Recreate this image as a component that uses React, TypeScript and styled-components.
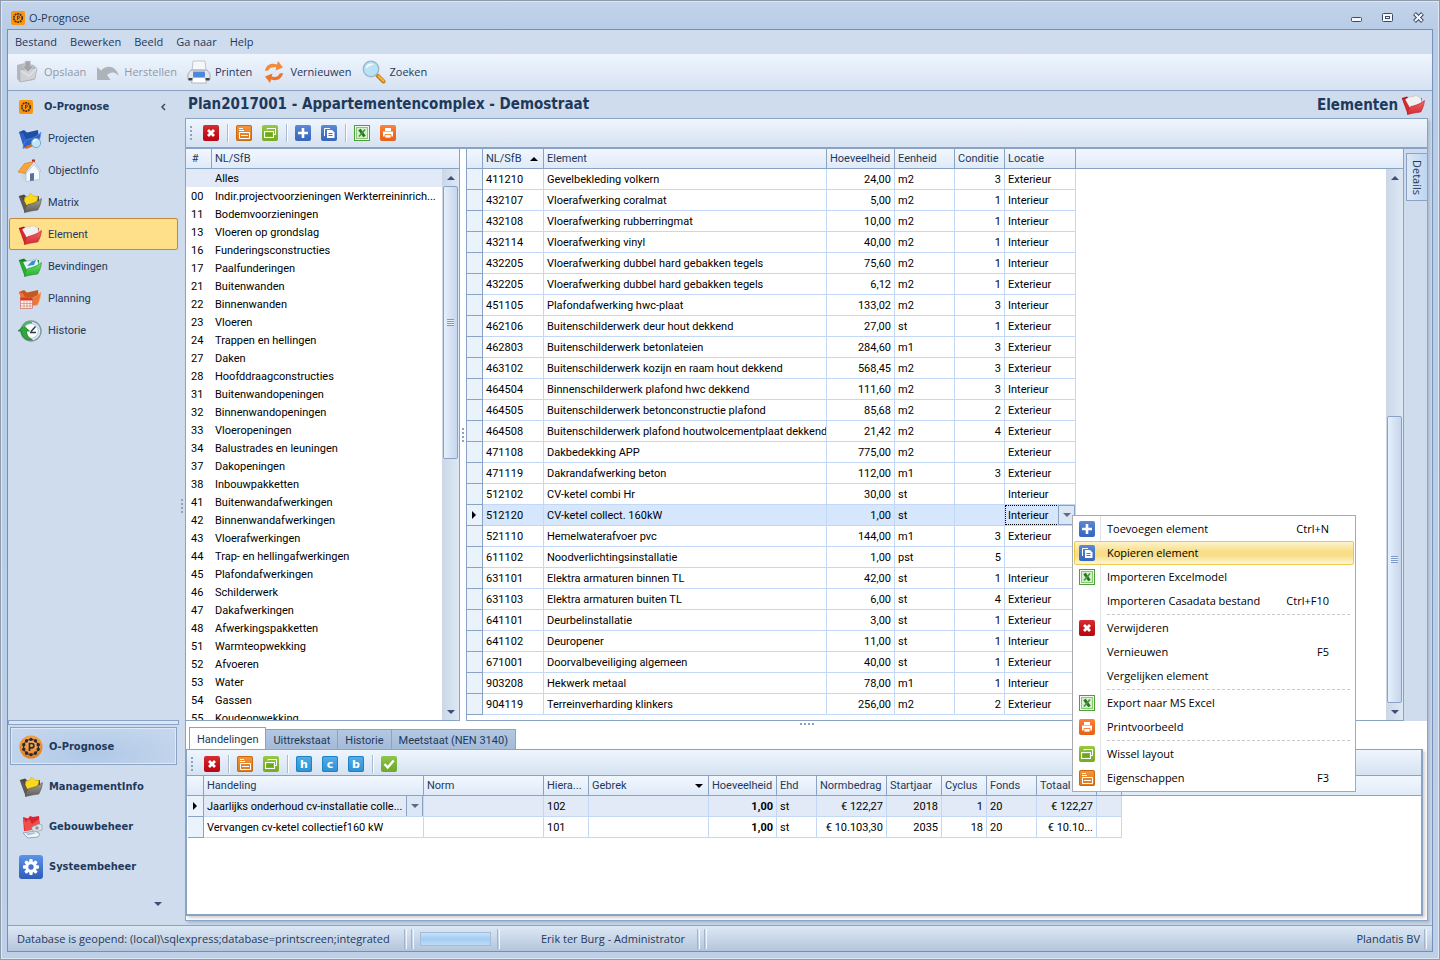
import React from 'react';
import styled, { createGlobalStyle, css } from 'styled-components';

const gridFont = 'Roboto, "DejaVu Sans Condensed", sans-serif';
const boldFont = '"DejaVu Sans Condensed", "DejaVu Sans", sans-serif';
const uiFont = '"Open Sans", "Noto Sans", sans-serif';

const line = '#8aa3c4';
const cellLine = '#c3d8f6';
const navy = '#1e395b';

const GlobalStyle = createGlobalStyle`
  * { box-sizing: border-box; }
  html, body { margin: 0; height: 100%; }
  body { background: #bdd0e8; color: ${navy}; font: 11px/16px ${gridFont}; }
  button, select { font: inherit; color: inherit; }
  button { background: none; border: 0; padding: 0; margin: 0; text-align: left; }
  a { color: inherit; text-decoration: none; }
  svg { display: block; flex: none; }
`;

/* ---------- icons ---------- */

const Svg = ({ size = 24, box = 24, children }: { size?: number; box?: number; children: React.ReactNode }) => (
  <svg width={size} height={size} viewBox={`0 0 ${box} ${box}`} aria-hidden="true">{children}</svg>
);

const AppIcon = () => (
  <Svg size={14} box={14}>
    <rect width="14" height="14" rx="2" fill="#ff9408" />
    <circle cx="7" cy="7" r="4.2" fill="none" stroke="#3c3433" strokeWidth="1.7" strokeDasharray="1.9 0.74" />
    <path d="M6.500 9V5h.8a1.200 1.200 0 0 1 0 2.400h-.8" fill="none" stroke="#3c3433" strokeWidth=".9" />
  </Svg>
);

const PrognoseIcon = () => (
  <Svg>
    <defs>
      <radialGradient id="orangeBall" cx="50%" cy="30%" r="75%">
        <stop offset="0" stopColor="#f9b25c" />
        <stop offset="1" stopColor="#e07a1c" />
      </radialGradient>
    </defs>
    <circle cx="12" cy="12" r="11.500" fill="url(#orangeBall)" />
    <circle cx="12" cy="12" r="7.600" fill="none" stroke="#2c2a33" strokeWidth="1" />
    {[0, 36, 72, 108, 144, 180, 216, 252, 288, 324].map((a) => (
      <circle key={a} cx="12" cy="4.400" r="1.700" fill="#2c2a33" transform={`rotate(${a} 12 12)`} />
    ))}
    <path d="M10.500 16V8.500h2.200a2.100 2.100 0 0 1 0 4.300h-2" fill="none" stroke="#2c2a33" strokeWidth="1.700" />
  </Svg>
);

type FolderTone = 'red' | 'blue' | 'dark' | 'green' | 'orange';
const folderTones: Record<FolderTone, [string, string, string]> = {
  red: ['#b3141c', '#f0686a', '#d42a30'],
  blue: ['#1f4ea6', '#5d95ea', '#2d63c8'],
  dark: ['#4a4a48', '#a5a294', '#5f5d57'],
  green: ['#16861f', '#6be06a', '#25b030'],
  orange: ['#c65a1e', '#f8a36a', '#ea7637'],
};

const FolderIcon = ({ tone, children }: { tone: FolderTone; children?: React.ReactNode }) => {
  const [dark, light, mid] = folderTones[tone];
  return (
    <Svg>
      <defs>
        <linearGradient id={`folder-${tone}`} x1="0" y1="0" x2="0" y2="1">
          <stop offset="0" stopColor={light} />
          <stop offset="1" stopColor={mid} />
        </linearGradient>
      </defs>
      <path d="M1 5l5-1.500L9 6l12-1v9L7 21z" fill={dark} />
      {children || <path d="M4 6.500l5-3 2 .500 4-1.500 5 2.500 1 5-11 4-3 2z" fill="#f3f1ef" stroke="#bbb5b3" strokeWidth=".5" />}
      <path d="M1 5l3 1.500 4.500 8L7 21.500z" fill={mid} stroke={dark} strokeWidth=".4" />
      <path d="M6.500 21.500c0-3.500 1-6 3.500-8C15 12.500 19 11 23.500 7.500c-.500 4.500-1.700 8-3.700 11.500C15 19.500 11 20.500 6.500 21.500z" fill={`url(#folder-${tone})`} stroke={dark} strokeWidth=".5" />
    </Svg>
  );
};

const FolderIconWith = ({ tone, children }: { tone: FolderTone; children: React.ReactNode }) => {
  const [dark, light, mid] = folderTones[tone];
  return (
    <Svg>
      <path d="M1 5l5-2 3 2.500L20 3l1 10-13 8z" fill={dark} />
      <path d="M1 5l4 1.500 4 7.500-3 7.500z" fill={mid} />
      <path d="M5 21.500c0-4 1.500-7 4-9C14 11.500 19 10 23 5c-.500 5-1.500 9-3.500 13-4 .500-9 1-14.500 3.500z" fill={mid} stroke={light} strokeWidth=".7" />
      {children}
    </Svg>
  );
};

const ProjectsIcon = () => (
  <FolderIconWith tone="blue">
    <path d="M8.500 20.500l6-2.500" stroke="#c9702a" strokeWidth="2.600" strokeLinecap="round" />
    <circle cx="18" cy="16" r="4.600" fill="#bfe6fa" stroke="#7fa6c4" strokeWidth="1" />
    <path d="M15.500 15a3 3 0 0 1 3-2.500" stroke="#fff" strokeWidth="1.300" fill="none" />
  </FolderIconWith>
);

const HomeIcon = () => (
  <Svg>
    <path d="M14 .500h3V7h-3z" fill="#b5262a" />
    <path d="M3 11.500l5 1V22l-5-3z" fill="#c9d6e6" />
    <path d="M8 12.500L16 4l5.500 7v9.500L8 22.500z" fill="#f5f8fc" stroke="#9fb2cc" strokeWidth=".6" />
    <path d="M12 14.500l4-.500v7.500l-4 .500z" fill="#5c6f9a" />
    <path d="M0 13L6.500 4.500 16 2.500 8.500 12l-1 2.500z" fill="#f9a53a" stroke="#d27a18" strokeWidth=".6" />
    <path d="M16 2.500l7 9.500-1.500.500L16 5.500 8.500 14l-1-.500z" fill="#e8eef6" stroke="#8fa3bf" strokeWidth=".5" />
  </Svg>
);

const StarPaper = () => <path d="M6 11l1-5 3.500-.500L12.500 2l3 3 4.500.500-1 4 1 2-12 3z" fill="#fbd91c" stroke="#e2a80c" strokeWidth=".6" />;

const FindingsPaper = () => (
  <g>
    <path d="M5 7l14-3 2 6-13 5z" fill="#e6f3fb" stroke="#8db6a0" strokeWidth=".5" />
    <path d="M9 11l5-5 4-1-2 5z" fill="#3b8fd0" />
  </g>
);

const PlanningIcon = () => (
  <FolderIconWith tone="orange">
    <rect x="2.500" y="10.500" width="12" height="11" fill="#fdf5f2" stroke="#c96a5a" strokeWidth=".7" />
    <path d="M2.500 10.500h12v3h-12z" fill="#d8382c" />
    <path d="M3 16.500h11M3 19h11M6 14v7M9 14v7M12 14v7" stroke="#e08b80" strokeWidth=".8" />
  </FolderIconWith>
);

const HistoryIcon = () => (
  <Svg>
    <circle cx="13" cy="12" r="10" fill="#eef4f8" stroke="#8a96a2" strokeWidth="1.500" />
    <circle cx="13" cy="12" r="7.500" fill="#fff" stroke="#b4d8ea" strokeWidth="1.500" />
    <path d="M13 12.500l4.500-5M12 13.500h6" stroke="#263746" strokeWidth="1.400" />
    <path d="M0 12l6-5 5.500 5H8.500c0 4 2 7 6 9-6 .800-11-3-11.300-9z" fill="#2fa83a" stroke="#16701f" strokeWidth=".7" />
    <path d="M5 8C7 4.500 10 3 14 3.500" fill="none" stroke="#49b455" strokeWidth="2" />
  </Svg>
);

const GebouwIcon = () => (
  <Svg>
    <path d="M4 2l5 1.500L11 1l3 1 6-1 1 11-9 3-7 1z" fill="#d9242c" />
    <path d="M4 2l3 5 3-3 3 5 7-5v7l-8 4-6 1z" fill="#ee4e4e" />
    <path d="M13 12l7-3 3 1v5l-7 2-3-2z" fill="#dfe3e6" stroke="#8c959c" strokeWidth=".6" />
    <circle cx="18" cy="13" r="1.800" fill="#8b97a3" />
    <path d="M4 18l12-2 5 3-2 3-10 1z" fill="#f2f5f7" stroke="#8c959c" strokeWidth=".8" />
    <path d="M7 18.500l8-1.300 2 1.300-8 1.800z" fill="#8fc5ee" />
  </Svg>
);

const SystemIcon = () => (
  <Svg>
    <defs>
      <linearGradient id="sysBlue" x1="0" y1="0" x2="0" y2="1">
        <stop offset="0" stopColor="#5b94ea" />
        <stop offset="1" stopColor="#2c5cb8" />
      </linearGradient>
    </defs>
    <rect width="24" height="24" rx="3" fill="url(#sysBlue)" />
    {[0, 45, 90, 135].map((a) => (
      <rect key={a} x="10.300" y="4" width="3.400" height="16" rx="1" fill="#fff" transform={`rotate(${a} 12 12)`} />
    ))}
    <circle cx="12" cy="12" r="5.800" fill="#fff" />
    <circle cx="12" cy="12" r="2.700" fill="#3f74cf" />
  </Svg>
);

const SaveIcon = () => (
  <Svg>
    <path d="M1 5l8-2 9 2 3 4-3 11L4 22 1 19z" fill="#b4b7bb" />
    <path d="M4 10l17-2-2 11L4 22z" fill="#cfd1d4" stroke="#a9acb0" strokeWidth=".7" />
    <path d="M4.500 10.500l8.500 5.500 7.500-7.500" fill="none" stroke="#e3e5e8" strokeWidth="1.200" />
    <path d="M9 1h5.500v5H18l-6 6-6-6h3z" fill="#a1a4a8" stroke="#d5d8dc" strokeWidth=".6" />
  </Svg>
);

const UndoIcon = () => (
  <Svg>
    <path d="M1 20V7l4 3.500C11 4 20 6 23 16c-3.500-4-7.500-5-12-1l3.500 5z" fill="#aeb3ba" />
  </Svg>
);

const PrinterIcon = () => (
  <Svg>
    <path d="M6 1h12l1 10H5z" fill="#f6f7f9" stroke="#b4bac2" strokeWidth=".8" />
    <path d="M4 10h16l3 4v5.500H1V14z" fill="#e4e7eb" stroke="#979da6" strokeWidth=".8" />
    <path d="M6 9.500h12v3H6z" fill="#b9bec6" />
    <rect x="6" y="12" width="12" height="5" rx="1" fill="#4d86dc" />
    <path d="M1.500 18h21v2.500h-21z" fill="#3c424b" />
    <path d="M6 17.500h12l1.500 5.500h-15z" fill="#fff" stroke="#a2a9b2" strokeWidth=".8" />
  </Svg>
);

const RefreshIcon = () => (
  <Svg>
    <path d="M3 11C4 5 9 2.500 15 4.500L16 1l5 6.500-7.500 3 .800-3C10.500 6.500 7 7.500 6.500 10.500z" fill="#f38a3c" />
    <path d="M21 13c-1 6-6 8.500-12 6.500L8 23l-5-6.500 7.500-3-.800 3c3.800 1 7.300 0 7.800-3z" fill="#ef7427" />
  </Svg>
);

const SearchIcon = () => (
  <Svg>
    <path d="M15.500 15.500l6 6" stroke="#c27a1c" strokeWidth="4" strokeLinecap="round" />
    <path d="M16.500 16l5 5" stroke="#f2b548" strokeWidth="2" strokeLinecap="round" />
    <circle cx="9" cy="9" r="7.700" fill="#b9e2f8" stroke="#9fb9cc" strokeWidth="1.500" />
    <path d="M4 9a5 5 0 0 1 8-4.500C9 5 6 6.500 4 9z" fill="#f3fbff" />
  </Svg>
);

type SmallName = 'delete' | 'form' | 'windows' | 'plus' | 'copy' | 'excel' | 'print' | 'h' | 'c' | 'b' | 'check';

const smallFill: Record<SmallName, string> = {
  delete: '#d0060c', form: '#f5861a', windows: '#84c022', plus: '#3e74cd', copy: '#3e74cd', excel: '#f2faee',
  print: '#ff6c14', h: '#35a3e6', c: '#35a3e6', b: '#35a3e6', check: '#7cbc2b',
};

const smallArt: Record<SmallName, React.ReactNode> = {
  delete: <path d="M5 5l6 6M11 5l-6 6" stroke="#fff" strokeWidth="2.800" />,
  form: (
    <g fill="none" stroke="#fff">
      <rect x=".5" y=".5" width="15" height="15" rx="1.500" stroke="#c86a10" />
      <path d="M3 3.500h4M3 5.500h5" />
      <path d="M3.500 7.500h10v6h-10z" />
      <path d="M5 10.500h7" />
    </g>
  ),
  windows: (
    <g fill="none" stroke="#fff">
      <path d="M5 4.500V3.500h8.500v6H12" />
      <rect x="2.500" y="6.500" width="9" height="6" />
      <rect x="4" y="8" width="6" height="3" fill="#6ba816" stroke="none" />
    </g>
  ),
  plus: <path d="M8 3v10M3 8h10" stroke="#fff" strokeWidth="2.600" />,
  copy: (
    <g>
      <path d="M3.500 11V3.500H9" fill="none" stroke="#fff" />
      <path d="M6 5h5l2.500 2.500V13H6z" fill="#fff" />
      <path d="M7.500 8.500h4M7.500 10.500h4" stroke="#3e74cd" />
    </g>
  ),
  excel: (
    <g>
      <rect x=".5" y=".5" width="15" height="15" fill="none" stroke="#4aa234" />
      <rect x="2.500" y="2.500" width="11" height="11" fill="#d8ecd0" stroke="#8cc47c" />
      <path d="M5.500 4.500l5 7" stroke="#23791a" strokeWidth="3" />
      <path d="M11 4.500l-6 7" stroke="#3f9a30" strokeWidth="1.600" />
    </g>
  ),
  print: (
    <g>
      <path d="M5 3h6v3H5z" fill="#fff" />
      <path d="M3 6.500h10v5H3z" fill="#fff" />
      <path d="M5 9.500h6v3.500H5z" fill="#fff" stroke="#ff6c14" strokeWidth=".8" />
    </g>
  ),
  h: null, c: null, b: null,
  check: <path d="M3.500 8l3.200 3.500 6-7" fill="none" stroke="#fff" strokeWidth="2.400" />,
};

const SmallIcon = ({ name }: { name: SmallName }) => (
  <Svg size={16} box={16}>
    <defs>
      <linearGradient id="gloss" x1="0" y1="0" x2="0" y2="1">
        <stop offset="0" stopColor="#fff" stopOpacity=".16" />
        <stop offset="1" stopColor="#003" stopOpacity=".1" />
      </linearGradient>
    </defs>
    <rect width="16" height="16" rx={name === 'excel' ? 0 : 2} fill={smallFill[name]} />
    {name !== 'excel' && <rect width="16" height="16" rx="2" fill="url(#gloss)" />}
    {smallArt[name]}
    {name.length === 1 && (
      <>
        <rect x=".5" y=".5" width="15" height="15" rx="1.500" fill="none" stroke="#1c83c6" />
        <text x="8" y="12" textAnchor="middle" fontFamily="DejaVu Sans" fontWeight="700" fontSize="11" fill="#fff">{name}</text>
      </>
    )}
  </Svg>
);

const Arrow = ({ dir, color = '#3f4d78' }: { dir: 'up' | 'down' | 'right'; color?: string }) => (
  <svg width={dir === 'right' ? 4 : 8} height={dir === 'right' ? 8 : 4} viewBox={dir === 'right' ? '0 0 4 8' : '0 0 8 4'} aria-hidden="true">
    <path d={dir === 'up' ? 'M0 4l4-4 4 4z' : dir === 'down' ? 'M0 0l4 4 4-4z' : 'M0 0l4 4-4 4z'} fill={color} />
  </svg>
);

/* ---------- window frame ---------- */

const Window = styled.div`
  display: flex;
  flex-direction: column;
  height: 100vh;
  padding: 0 7px 7px;
  border: 1px solid #8f9bab;
  box-shadow: inset 0 0 0 1px #dbe7f5;
  background: linear-gradient(#c3d4eb, #b9cce6 29px, #bdd0e8);
  overflow: hidden;
  font-family: ${uiFont};
`;

const TitleBar = styled.header`
  display: flex;
  align-items: center;
  gap: 4px;
  flex: none;
  height: 28px;
  padding: 5px 7px 0 3px;
`;

const TitleText = styled.span`
  flex: 1;
`;

const CaptionButtons = styled.div`
  display: flex;
  gap: 19px;
`;

const Client = styled.div`
  display: flex;
  flex-direction: column;
  flex: 1;
  min-height: 0;
  border: 1px solid #7590b6;
  background: #cfdcee;
  margin: 0 -1px;
`;

const MenuBar = styled.nav`
  display: flex;
  align-items: center;
  gap: 13px;
  flex: none;
  height: 24px;
  padding: 0 7px;
`;

const MainToolbar = styled.div`
  display: flex;
  align-items: center;
  gap: 10px;
  flex: none;
  height: 37px;
  padding: 0 8px;
  border-bottom: 1px solid ${line};
  background: linear-gradient(#eef5fd, #d7e3f2);
`;

const ToolButton = styled.button`
  display: flex;
  align-items: center;
  gap: 4px;
  &:disabled { color: #8f99a8; }
`;

const Body = styled.div`
  display: grid;
  grid-template-columns: 171px 6px minmax(0, 1fr);
  flex: 1;
  min-height: 0;
  padding: 0 4px 4px 0;
`;

/* ---------- sidebar ---------- */

const Sidebar = styled.aside`
  display: flex;
  flex-direction: column;
  min-height: 0;
  font-family: ${gridFont};
`;

const SideHeader = styled.div`
  display: flex;
  align-items: center;
  gap: 11px;
  height: 31px;
  padding: 0 12px 0 11px;
  font-family: ${boldFont};
  font-weight: bold;
`;

const SideTitle = styled.span`
  flex: 1;
`;

const NavItem = styled.a<{ $active?: boolean }>`
  display: flex;
  align-items: center;
  gap: 6px;
  height: 32px;
  margin: 0 1px;
  padding: 2px 8px 0;
  border: 1px solid transparent;
  border-radius: 2px;
  ${(p) => p.$active && css`
    border-color: #c48a3c;
    background: #ffe08a;
  `}
`;

const SideSplitter = styled.div`
  height: 5px;
  margin: auto 0 2px;
  border: 1px solid ${line};
  background: #d9e6f6;
`;

const GroupButton = styled.button<{ $active?: boolean }>`
  display: flex;
  align-items: center;
  gap: 6px;
  height: 38px;
  margin: 0 2px 2px;
  padding: 2px 8px 0;
  border: 1px solid transparent;
  font-family: ${boldFont};
  font-weight: bold;
  ${(p) => p.$active && css`
    border-color: ${line};
    background: radial-gradient(ellipse at 50% 70%, #b0c8e6, #c8d9ee);
    box-shadow: inset 0 0 0 1px #dce9f8;
  `}
`;

const SideFooter = styled.div`
  display: flex;
  justify-content: flex-end;
  align-items: center;
  height: 34px;
  padding-right: 17px;
`;

const DotGrip = styled.div<{ $row?: boolean }>`
  display: flex;
  flex-direction: ${(p) => (p.$row ? 'row' : 'column')};
  align-self: center;
  justify-self: center;
  gap: 2px;
  i { width: 2px; height: 2px; background: #8aa3c4; }
`;

/* ---------- content ---------- */

const Content = styled.main`
  display: flex;
  flex-direction: column;
  min-width: 0;
  min-height: 0;
`;

const PageHeader = styled.div`
  display: flex;
  justify-content: space-between;
  height: 27px;
  padding: 0 3px;
  font: bold 15px/26px ${boldFont};
`;

const PageTitle = styled.h1`
  margin: 0;
  font: inherit;
`;

const SectionTitle = styled.div`
  display: flex;
  align-items: center;
  gap: 3px;
`;

const Panel = styled.div`
  display: flex;
  flex-direction: column;
  flex: 1;
  min-height: 0;
  border: 1px solid ${line};
  background: #fff;
  box-shadow: 2px 2px 3px #a9b9cf;
`;

const IconBar = styled.div<{ $lower?: boolean }>`
  display: flex;
  align-items: center;
  flex: none;
  height: ${(p) => (p.$lower ? 26 : 30)}px;
  padding: ${(p) => (p.$lower ? 3 : 0)}px 0 0 4px;
  border-bottom: ${(p) => (p.$lower ? 1 : 2)}px solid ${line};
  background: linear-gradient(#eff5fd, #d6e2f1);
`;

const BarGrip = styled(DotGrip)`
  margin-right: 6px;
`;

const IconButton = styled.button`
  display: grid;
  place-items: center;
  width: 26px;
  height: 22px;
`;

const BarSeparator = styled.span`
  width: 2px;
  height: 18px;
  margin: 0 2px 0 3px;
  border-left: 1px solid #a9bad2;
  border-right: 1px solid #fff;
`;

const Upper = styled.div`
  position: relative;
  display: grid;
  grid-template-columns: 274px 6px minmax(0, 1fr) 23px;
  flex: 1;
  min-height: 0;
`;

const GridBox = styled.div<{ $first?: boolean }>`
  display: flex;
  flex-direction: column;
  min-width: 0;
  min-height: 0;
  border: solid ${line};
  border-width: 0 1px 1px ${(p) => (p.$first ? 0 : 1)}px;
  background: #fff;
  font-family: ${gridFont};
`;

const GridBody = styled.div`
  display: flex;
  flex: 1;
  min-height: 0;
  overflow: hidden;
  background:
    linear-gradient(${line}, ${line}) no-repeat 0 19px / 100% 1px,
    linear-gradient(#f2f7fe, #dfeaf8) no-repeat 0 0 / 100% 20px;
`;

const TableArea = styled.div`
  flex: 1;
  min-width: 0;
  overflow: hidden;
`;

const Table = styled.table`
  table-layout: fixed;
  width: 0;
  border-collapse: separate;
  border-spacing: 0;
  white-space: nowrap;
`;

const HeadCell = styled.th`
  height: 20px;
  padding: 0 3px;
  overflow: hidden;
  border-right: 1px solid ${line};
  border-bottom: 1px solid ${line};
  background: linear-gradient(#f2f7fe, #dfeaf8);
  font-weight: normal;
  line-height: 18px;
  text-align: left;
`;

const HeadFlex = styled.span`
  display: flex;
  align-items: center;
  justify-content: space-between;
  padding-right: 2px;
`;

const TreeCell = styled.td<{ $code?: boolean }>`
  height: 18px;
  padding: 2px 0 0 ${(p) => (p.$code ? 5 : 3)}px;
  overflow: hidden;
  color: #000;
  line-height: 16px;
`;

const TreeRow = styled.tr<{ $active?: boolean }>`
  background: ${(p) => (p.$active ? '#e1eaf6' : '#fff')};
`;

const Row = styled.tr<{ $bg?: string }>`
  background: ${(p) => p.$bg || '#fff'};
`;

const RowMark = styled.th`
  height: 21px;
  padding: 0 0 0 5px;
  border-right: 1px solid ${line};
  border-bottom: 1px solid ${line};
  background: #eaf2fb;
`;

const Cell = styled.td<{ $right?: boolean; $bold?: boolean; $edit?: boolean }>`
  height: 21px;
  padding: ${(p) => (p.$edit ? '0' : '2px 3px 0')};
  overflow: hidden;
  border-right: 1px solid ${cellLine};
  border-bottom: 1px solid ${cellLine};
  color: #000;
  line-height: 18px;
  text-align: ${(p) => (p.$right ? 'right' : 'left')};
  font-weight: ${(p) => (p.$bold ? 'bold' : 'normal')};
`;

const Editor = styled.label<{ $dotted?: boolean }>`
  display: flex;
  height: 20px;
  border: ${(p) => (p.$dotted ? '1px dotted #000' : '0')};
  border-right: 0;
`;

const EditorSelect = styled.select<{ $dotted?: boolean }>`
  appearance: none;
  flex: 1;
  min-width: 0;
  padding: 1px 0 0 ${(p) => (p.$dotted ? 2 : 3)}px;
  border: 0;
  border-radius: 0;
  background: transparent;
  color: #000;
  outline: 0;
`;

const EditorArrow = styled.span`
  display: grid;
  place-items: center;
  width: 17px;
  margin: -1px 0;
  border: 1px solid ${line};
  background: #dbe7f5;
`;

const ScrollTrack = styled.div`
  display: flex;
  flex-direction: column;
  flex: none;
  width: 17px;
  margin-top: 20px;
  padding: 0 1px;
  background: linear-gradient(90deg, #c9d7e8, #dde8f3);
`;

const ScrollEnd = styled.span`
  display: grid;
  place-items: center;
  height: 17px;
`;

const ScrollSpace = styled.span<{ $grow: number }>`
  flex: ${(p) => p.$grow} 0 0;
`;

const ScrollThumb = styled.span<{ $grow: number }>`
  display: grid;
  place-items: center;
  flex: ${(p) => p.$grow} 0 0;
  border: 1px solid ${line};
  border-radius: 2px;
  background: linear-gradient(90deg, #e7effa, #c5d6ed);
`;

const ThumbLines = styled.i`
  width: 7px;
  height: 7px;
  background: repeating-linear-gradient(#7f9ac2 0 1px, #e8f0fa 1px 2px);
`;

const DetailStrip = styled.div`
  padding: 4px 0 0 2px;
  background: #cfdcee;
`;

const DetailTab = styled.button`
  width: 21px;
  height: 48px;
  border: 1px solid ${line};
  border-right: 0;
  background: linear-gradient(90deg, #dbe8f8, #bfd5f0);
  writing-mode: vertical-rl;
  text-align: center;
  line-height: 19px;
`;

/* ---------- lower panel ---------- */

const LowerGrip = styled.div`
  display: grid;
  height: 6px;
`;

const Lower = styled.section`
  display: flex;
  flex-direction: column;
  flex: none;
  padding: 0 4px 4px 0;
  font-family: ${gridFont};
`;

const Tabs = styled.div`
  display: flex;
  align-items: flex-end;
  height: 22px;
  padding-left: 3px;
`;

const Tab = styled.button<{ $active?: boolean }>`
  height: 20px;
  padding: 2px 7px 0;
  border: 1px solid ${line};
  border-left-width: 0;
  border-bottom: 0;
  background: linear-gradient(#b3c8e2, #a3bad8);
  ${(p) => p.$active && css`
    height: 23px;
    margin-bottom: -1px;
    border-left-width: 1px;
    background: #fff;
  `}
`;

const LowerBox = styled.div`
  min-height: 167px;
  border: 2px solid ${line};
  border-top-width: 1px;
  border-left-width: 1px;
  background: #fff;
  box-shadow: 2px 2px 3px #cfcfd4;
`;

const LowerGrid = styled.div`
  overflow: hidden;
  padding-left: 1px;
  background:
    linear-gradient(${line}, ${line}) no-repeat 0 19px / 100% 1px,
    linear-gradient(#f2f7fe, #dfeaf8) no-repeat 0 0 / 100% 20px;
`;

/* ---------- status bar ---------- */

const StatusBar = styled.footer`
  display: flex;
  align-items: center;
  flex: none;
  height: 26px;
  padding: 0 5px 0 9px;
  border-top: 1px solid ${line};
  background: linear-gradient(#dde8f5, #b4c5dc);
`;

const StatusSep = styled.span`
  width: 3px;
  height: 20px;
  margin-left: 4px;
  border-left: 1px solid #a3b4cc;
  border-right: 1px solid #f2f6fb;
`;

const StatusText = styled.span<{ $w?: number; $end?: boolean }>`
  min-width: ${(p) => p.$w || 0}px;
  margin-left: ${(p) => (p.$end ? 'auto' : '0')};
`;

const Progress = styled.span`
  width: 71px;
  height: 14px;
  margin: 0 2px 0 6px;
  border: 1px solid #a3bcdc;
  background: linear-gradient(#c6e0f8, #a4cdf2 50%, #bcdcf7);
`;

const StatusGap = styled.span`
  width: 41px;
`;

/* ---------- context menu ---------- */

const Popup = styled.div`
  position: absolute;
  z-index: 5;
  left: 886px;
  top: 366px;
  width: 284px;
  padding: 1px;
  border: 1px solid #a7abb0;
  background: linear-gradient(90deg, #fff 27px, #e2e4e7 27px 28px, #fff 28px);
  color: #000;
`;

const PopupItem = styled.button<{ $active?: boolean }>`
  display: grid;
  grid-template-columns: 28px 1fr auto;
  align-items: center;
  width: 100%;
  height: 24px;
  padding: 0 24px 0 4px;
  border: 1px solid transparent;
  border-radius: 2px;
  ${(p) => p.$active && css`
    border-color: #ecc850;
    background: linear-gradient(#fdf3cd, #f8e08c 40%, #f7dd82 60%, #fdf6d8);
  `}
`;

const PopupSep = styled.div`
  height: 3px;
  margin: 0 3px 0 33px;
  background: repeating-linear-gradient(90deg, #c8c8c8 0 3px, transparent 3px 5px) no-repeat 0 1px / 100% 1px;
`;

/* ---------- data ---------- */

const navItems: [string, React.ReactNode][] = [
  ['Projecten', <ProjectsIcon key="i" />],
  ['ObjectInfo', <HomeIcon key="i" />],
  ['Matrix', <FolderIcon key="i" tone="dark"><StarPaper /></FolderIcon>],
  ['Element', <FolderIcon key="i" tone="red" />],
  ['Bevindingen', <FolderIcon key="i" tone="green"><FindingsPaper /></FolderIcon>],
  ['Planning', <PlanningIcon key="i" />],
  ['Historie', <HistoryIcon key="i" />],
];

const groups: [string, React.ReactNode][] = [
  ['O-Prognose', <PrognoseIcon key="i" />],
  ['ManagementInfo', <FolderIcon key="i" tone="dark"><StarPaper /></FolderIcon>],
  ['Gebouwbeheer', <GebouwIcon key="i" />],
  ['Systeembeheer', <SystemIcon key="i" />],
];

const tree: [string, string][] = [
  ['', 'Alles'], ['00', 'Indir.projectvoorzieningen Werkterreininrich...'], ['11', 'Bodemvoorzieningen'],
  ['13', 'Vloeren op grondslag'], ['16', 'Funderingsconstructies'], ['17', 'Paalfunderingen'], ['21', 'Buitenwanden'],
  ['22', 'Binnenwanden'], ['23', 'Vloeren'], ['24', 'Trappen en hellingen'], ['27', 'Daken'],
  ['28', 'Hoofddraagconstructies'], ['31', 'Buitenwandopeningen'], ['32', 'Binnenwandopeningen'],
  ['33', 'Vloeropeningen'], ['34', 'Balustrades en leuningen'], ['37', 'Dakopeningen'], ['38', 'Inbouwpakketten'],
  ['41', 'Buitenwandafwerkingen'], ['42', 'Binnenwandafwerkingen'], ['43', 'Vloerafwerkingen'],
  ['44', 'Trap- en hellingafwerkingen'], ['45', 'Plafondafwerkingen'], ['46', 'Schilderwerk'], ['47', 'Dakafwerkingen'],
  ['48', 'Afwerkingspakketten'], ['51', 'Warmteopwekking'], ['52', 'Afvoeren'], ['53', 'Water'], ['54', 'Gassen'],
  ['55', 'Koudeopwekking'],
];

const elements: string[][] = [
  ['411210', 'Gevelbekleding volkern', '24,00', 'm2', '3', 'Exterieur'],
  ['432107', 'Vloerafwerking coralmat', '5,00', 'm2', '1', 'Interieur'],
  ['432108', 'Vloerafwerking rubberringmat', '10,00', 'm2', '1', 'Interieur'],
  ['432114', 'Vloerafwerking vinyl', '40,00', 'm2', '1', 'Interieur'],
  ['432205', 'Vloerafwerking dubbel hard gebakken tegels', '75,60', 'm2', '1', 'Interieur'],
  ['432205', 'Vloerafwerking dubbel hard gebakken tegels', '6,12', 'm2', '1', 'Exterieur'],
  ['451105', 'Plafondafwerking hwc-plaat', '133,02', 'm2', '3', 'Interieur'],
  ['462106', 'Buitenschilderwerk deur hout dekkend', '27,00', 'st', '1', 'Exterieur'],
  ['462803', 'Buitenschilderwerk betonlateien', '284,60', 'm1', '3', 'Exterieur'],
  ['463102', 'Buitenschilderwerk kozijn en raam hout dekkend', '568,45', 'm2', '3', 'Exterieur'],
  ['464504', 'Binnenschilderwerk plafond hwc dekkend', '111,60', 'm2', '3', 'Interieur'],
  ['464505', 'Buitenschilderwerk betonconstructie plafond', '85,68', 'm2', '2', 'Exterieur'],
  ['464508', 'Buitenschilderwerk plafond houtwolcementplaat dekkend', '21,42', 'm2', '4', 'Exterieur'],
  ['471108', 'Dakbedekking APP', '775,00', 'm2', '', 'Exterieur'],
  ['471119', 'Dakrandafwerking beton', '112,00', 'm1', '3', 'Exterieur'],
  ['512102', 'CV-ketel combi Hr', '30,00', 'st', '', 'Interieur'],
  ['512120', 'CV-ketel collect. 160kW', '1,00', 'st', '', 'Interieur'],
  ['521110', 'Hemelwaterafvoer pvc', '144,00', 'm1', '3', 'Exterieur'],
  ['611102', 'Noodverlichtingsinstallatie', '1,00', 'pst', '5', ''],
  ['631101', 'Elektra armaturen binnen TL', '42,00', 'st', '1', 'Interieur'],
  ['631103', 'Elektra armaturen buiten TL', '6,00', 'st', '4', 'Exterieur'],
  ['641101', 'Deurbelinstallatie', '3,00', 'st', '1', 'Exterieur'],
  ['641102', 'Deuropener', '11,00', 'st', '1', 'Interieur'],
  ['671001', 'Doorvalbeveiliging algemeen', '40,00', 'st', '1', 'Exterieur'],
  ['903208', 'Hekwerk metaal', '78,00', 'm1', '1', 'Interieur'],
  ['904119', 'Terreinverharding klinkers', '256,00', 'm2', '2', 'Exterieur'],
];
const selectedElement = '512120';

const actionHeads = ['Handeling', 'Norm', 'Hiera...', 'Gebrek', 'Hoeveelheid', 'Ehd', 'Normbedrag', 'Startjaar', 'Cyclus', 'Fonds', 'Totaal', ''];
const actionWidths = [16, 220, 120, 45, 120, 68, 40, 70, 55, 45, 50, 60, 25];
const actionRight = [4, 6, 7, 8, 10];
const actions: string[][] = [
  ['Jaarlijks onderhoud cv-installatie colle...', '', '102', '', '1,00', 'st', '€ 122,27', '2018', '1', '20', '€ 122,27', ''],
  ['Vervangen cv-ketel collectief160 kW', '', '101', '', '1,00', 'st', '€ 10.103,30', '2035', '18', '20', '€ 10.10...', ''],
];

type MenuEntry = { label: string; keys?: string; icon?: SmallName; active?: boolean } | null;
const popupItems: MenuEntry[] = [
  { label: 'Toevoegen element', keys: 'Ctrl+N', icon: 'plus' },
  { label: 'Kopieren element', icon: 'copy', active: true },
  { label: 'Importeren Excelmodel', icon: 'excel' },
  { label: 'Importeren Casadata bestand', keys: 'Ctrl+F10' },
  null,
  { label: 'Verwijderen', icon: 'delete' },
  { label: 'Vernieuwen', keys: 'F5' },
  { label: 'Vergelijken element' },
  null,
  { label: 'Export naar MS Excel', icon: 'excel' },
  { label: 'Printvoorbeeld', icon: 'print' },
  null,
  { label: 'Wissel layout', icon: 'windows' },
  { label: 'Eigenschappen', keys: 'F3', icon: 'form' },
];

const iconTitles: Record<SmallName, string> = {
  delete: 'Verwijderen', form: 'Eigenschappen', windows: 'Wissel layout', plus: 'Toevoegen', copy: 'Kopieren',
  excel: 'Excel', print: 'Printvoorbeeld', h: 'h', c: 'c', b: 'b', check: 'Gereed',
};

/* ---------- parts ---------- */

const Dots = () => <><i /><i /><i /><i /></>;

const Icons = ({ lower, items }: { lower?: boolean; items: (SmallName | '|')[] }) => (
  <IconBar $lower={lower} role="toolbar">
    <BarGrip><Dots /></BarGrip>
    {items.map((n, i) => (n === '|' ? <BarSeparator key={i} /> : (
      <IconButton key={i} aria-label={iconTitles[n]}><SmallIcon name={n} /></IconButton>
    )))}
  </IconBar>
);

const Scrollbar = ({ before, thumb, after }: { before: number; thumb: number; after: number }) => (
  <ScrollTrack aria-hidden="true">
    <ScrollEnd><Arrow dir="up" /></ScrollEnd>
    <ScrollSpace $grow={before} />
    <ScrollThumb $grow={thumb}><ThumbLines /></ScrollThumb>
    <ScrollSpace $grow={after} />
    <ScrollEnd><Arrow dir="down" /></ScrollEnd>
  </ScrollTrack>
);

const Columns = ({ widths }: { widths: number[] }) => (
  <colgroup>{widths.map((w, i) => <col key={i} width={w} />)}</colgroup>
);

const CellEditor = ({ label, value, dotted }: { label: string; value: string; dotted?: boolean }) => (
  <Editor $dotted={dotted}>
    <EditorSelect $dotted={dotted} aria-label={label} defaultValue={value}>
      <option>{value}</option>
    </EditorSelect>
    <EditorArrow><Arrow dir="down" color="#5a6b8c" /></EditorArrow>
  </Editor>
);

const ElementMenu = () => (
  <Popup role="menu">
    {popupItems.map((m, i) => (m ? (
      <PopupItem key={i} role="menuitem" $active={m.active}>
        <span>{m.icon && <SmallIcon name={m.icon} />}</span>
        <span>{m.label}</span>
        <span>{m.keys}</span>
      </PopupItem>
    ) : <PopupSep key={i} />))}
  </Popup>
);

export default function App() {
  return (
    <>
      <GlobalStyle />
      <Window>
        <TitleBar>
          <AppIcon />
          <TitleText>O-Prognose</TitleText>
          <CaptionButtons>
            <button aria-label="Minimaliseren">
              <Svg size={12} box={12}><rect x=".5" y="5.500" width="10" height="4" rx="1" fill="#f4f8fd" stroke="#3d4a63" /></Svg>
            </button>
            <button aria-label="Maximaliseren">
              <Svg size={12} box={12}>
                <rect x=".5" y="1.500" width="10" height="8" rx="1" fill="#f4f8fd" stroke="#3d4a63" />
                <rect x="3.500" y="4.500" width="4" height="2" fill="#f4f8fd" stroke="#3d4a63" />
              </Svg>
            </button>
            <button aria-label="Sluiten">
              <Svg size={12} box={12}>
                <path d="M1.500 1.500l8 8M9.500 1.500l-8 8" stroke="#3d4a63" strokeWidth="4" />
                <path d="M2 2l7 7M9 2l-7 7" stroke="#f4f8fd" strokeWidth="2" />
              </Svg>
            </button>
          </CaptionButtons>
        </TitleBar>
        <Client>
          <MenuBar>
            {['Bestand', 'Bewerken', 'Beeld', 'Ga naar', 'Help'].map((m) => <button key={m}>{m}</button>)}
          </MenuBar>
          <MainToolbar>
            <ToolButton disabled><SaveIcon />Opslaan</ToolButton>
            <ToolButton disabled><UndoIcon />Herstellen</ToolButton>
            <ToolButton><PrinterIcon />Printen</ToolButton>
            <ToolButton><RefreshIcon />Vernieuwen</ToolButton>
            <ToolButton><SearchIcon />Zoeken</ToolButton>
          </MainToolbar>
          <Body>
            <Sidebar>
              <SideHeader>
                <AppIcon />
                <SideTitle>O-Prognose</SideTitle>
                <Svg size={8} box={8}><path d="M6 1L3 4l3 3" fill="none" stroke="#3d4a63" strokeWidth="1.500" /></Svg>
              </SideHeader>
              {navItems.map(([label, icon]) => (
                <NavItem key={label} href="#" $active={label === 'Element'}>{icon}{label}</NavItem>
              ))}
              <SideSplitter />
              {groups.map(([label, icon], i) => (
                <GroupButton key={label} $active={i === 0}>{icon}{label}</GroupButton>
              ))}
              <SideFooter><Arrow dir="down" /></SideFooter>
            </Sidebar>
            <DotGrip><Dots /></DotGrip>
            <Content>
              <PageHeader>
                <PageTitle>Plan2017001 - Appartementencomplex - Demostraat</PageTitle>
                <SectionTitle>Elementen<FolderIcon tone="red" /></SectionTitle>
              </PageHeader>
              <Panel>
                <Icons items={['delete', '|', 'form', 'windows', '|', 'plus', 'copy', '|', 'excel', 'print']} />
                <Upper>
                  <GridBox $first>
                    <GridBody>
                      <TableArea>
                        <Table>
                          <Columns widths={[26, 231]} />
                          <thead><tr><HeadCell>&nbsp;#</HeadCell><HeadCell>NL/SfB</HeadCell></tr></thead>
                          <tbody>
                            {tree.map(([code, name], i) => (
                              <TreeRow key={i} $active={i === 0}>
                                <TreeCell $code>{code}</TreeCell><TreeCell>{name}</TreeCell>
                              </TreeRow>
                            ))}
                          </tbody>
                        </Table>
                      </TableArea>
                      <Scrollbar before={0} thumb={272} after={245} />
                    </GridBody>
                  </GridBox>
                  <DotGrip><Dots /></DotGrip>
                  <GridBox>
                    <GridBody>
                      <TableArea>
                        <Table>
                          <Columns widths={[16, 61, 283, 68, 60, 50, 71]} />
                          <thead>
                            <tr>
                              <HeadCell />
                              <HeadCell><HeadFlex>NL/SfB <Arrow dir="up" color="#000" /></HeadFlex></HeadCell>
                              {['Element', 'Hoeveelheid', 'Eenheid', 'Conditie', 'Locatie'].map((h) => <HeadCell key={h}>{h}</HeadCell>)}
                            </tr>
                          </thead>
                          <tbody>
                            {elements.map((r, i) => {
                              const selected = r[0] === selectedElement;
                              return (
                                <Row key={i} $bg={selected ? '#d5e6fd' : undefined}>
                                  <RowMark>{selected && <Arrow dir="right" color="#000" />}</RowMark>
                                  {r.map((v, c) => (
                                    <Cell key={c} $right={c === 2 || c === 4} $edit={selected && c === 5}>
                                      {selected && c === 5 ? <CellEditor label="Locatie" value={v} dotted /> : v}
                                    </Cell>
                                  ))}
                                </Row>
                              );
                            })}
                          </tbody>
                        </Table>
                      </TableArea>
                      <Scrollbar before={231} thumb={286} after={0} />
                    </GridBody>
                  </GridBox>
                  <DetailStrip><DetailTab>Details</DetailTab></DetailStrip>
                  <ElementMenu />
                </Upper>
                <LowerGrip><DotGrip $row><Dots /></DotGrip></LowerGrip>
                <Lower>
                  <Tabs role="tablist">
                    {['Handelingen', 'Uittrekstaat', 'Historie', 'Meetstaat (NEN 3140)'].map((t, i) => (
                      <Tab key={t} role="tab" aria-selected={i === 0} $active={i === 0}>{t}</Tab>
                    ))}
                  </Tabs>
                  <LowerBox>
                    <Icons lower items={['delete', '|', 'form', 'windows', '|', 'h', 'c', 'b', '|', 'check']} />
                    <LowerGrid>
                      <Table>
                        <Columns widths={actionWidths} />
                        <thead>
                          <tr>
                            <HeadCell />
                            {actionHeads.map((h, i) => (
                              <HeadCell key={i}>{h === 'Gebrek' ? <HeadFlex>Gebrek <Arrow dir="down" color="#000" /></HeadFlex> : h}</HeadCell>
                            ))}
                          </tr>
                        </thead>
                        <tbody>
                          {actions.map((r, i) => (
                            <Row key={i} $bg={i === 0 ? '#e1eaf6' : undefined}>
                              <RowMark>{i === 0 && <Arrow dir="right" color="#000" />}</RowMark>
                              {r.map((v, c) => (
                                <Cell key={c} $right={actionRight.includes(c)} $bold={c === 4} $edit={i === 0 && c === 0}>
                                  {i === 0 && c === 0 ? <CellEditor label="Handeling" value={v} /> : v}
                                </Cell>
                              ))}
                            </Row>
                          ))}
                        </tbody>
                      </Table>
                    </LowerGrid>
                  </LowerBox>
                </Lower>
              </Panel>
            </Content>
          </Body>
          <StatusBar>
            <StatusText $w={383}>Database is geopend: (local)\sqlexpress;database=printscreen;integrated</StatusText>
            <StatusSep /><StatusSep />
            <Progress role="progressbar" aria-label="Voortgang" />
            <StatusSep />
            <StatusGap />
            <StatusText $w={152}>Erik ter Burg - Administrator</StatusText>
            <StatusSep /><StatusSep />
            <StatusText $end>Plandatis BV</StatusText>
            <StatusSep />
          </StatusBar>
        </Client>
      </Window>
    </>
  );
}
